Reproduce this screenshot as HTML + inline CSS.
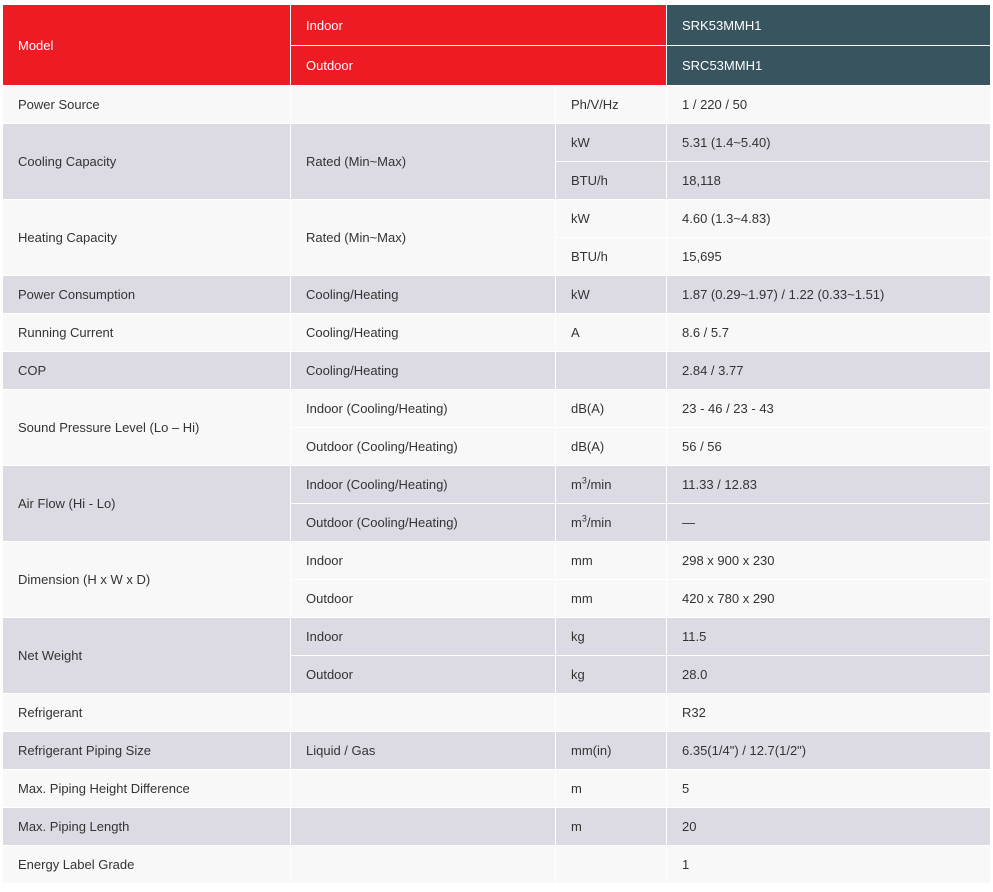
<!DOCTYPE html>
<html><head><meta charset="utf-8"><style>
body{margin:0;background:#fff;font-family:"Liberation Sans",sans-serif;}
table{position:absolute;left:2px;top:4px;border-collapse:collapse;table-layout:fixed;width:988px;font-size:13px;color:#333;}
td{border:1px solid #fff;padding:0 0 0 15px;height:37px;vertical-align:middle;white-space:nowrap;}
.h td{height:40px;color:#fff}
.h2 td{height:39px;color:#fff}
.r{background:#ed1c24}
.t{background:#37545f}
.l td{background:#f8f8f8}
.g td{background:#dcdbe4}
sup{font-size:9px;line-height:0}
</style></head><body>
<table>
<colgroup><col style="width:288px"><col style="width:265px"><col style="width:111px"><col style="width:324px"></colgroup>
<tr class="h"><td class="r" rowspan="2">Model</td><td class="r" colspan="2">Indoor</td><td class="t">SRK53MMH1</td></tr>
<tr class="h2"><td class="r" colspan="2">Outdoor</td><td class="t">SRC53MMH1</td></tr>
<tr class="l"><td>Power Source</td><td></td><td>Ph/V/Hz</td><td>1 / 220 / 50</td></tr>
<tr class="g"><td rowspan="2">Cooling Capacity</td><td rowspan="2">Rated (Min~Max)</td><td>kW</td><td>5.31 (1.4~5.40)</td></tr>
<tr class="g"><td>BTU/h</td><td>18,118</td></tr>
<tr class="l"><td rowspan="2">Heating Capacity</td><td rowspan="2">Rated (Min~Max)</td><td>kW</td><td>4.60 (1.3~4.83)</td></tr>
<tr class="l"><td>BTU/h</td><td>15,695</td></tr>
<tr class="g"><td>Power Consumption</td><td>Cooling/Heating</td><td>kW</td><td>1.87 (0.29~1.97) / 1.22 (0.33~1.51)</td></tr>
<tr class="l"><td>Running Current</td><td>Cooling/Heating</td><td>A</td><td>8.6 / 5.7</td></tr>
<tr class="g"><td>COP</td><td>Cooling/Heating</td><td></td><td>2.84 / 3.77</td></tr>
<tr class="l"><td rowspan="2">Sound Pressure Level (Lo – Hi)</td><td>Indoor (Cooling/Heating)</td><td>dB(A)</td><td>23 - 46 / 23 - 43</td></tr>
<tr class="l"><td>Outdoor (Cooling/Heating)</td><td>dB(A)</td><td>56 / 56</td></tr>
<tr class="g"><td rowspan="2">Air Flow (Hi - Lo)</td><td>Indoor (Cooling/Heating)</td><td>m<sup>3</sup>/min</td><td>11.33 / 12.83</td></tr>
<tr class="g"><td>Outdoor (Cooling/Heating)</td><td>m<sup>3</sup>/min</td><td>—</td></tr>
<tr class="l"><td rowspan="2">Dimension (H x W x D)</td><td>Indoor</td><td>mm</td><td>298 x 900 x 230</td></tr>
<tr class="l"><td>Outdoor</td><td>mm</td><td>420 x 780 x 290</td></tr>
<tr class="g"><td rowspan="2">Net Weight</td><td>Indoor</td><td>kg</td><td>11.5</td></tr>
<tr class="g"><td>Outdoor</td><td>kg</td><td>28.0</td></tr>
<tr class="l"><td>Refrigerant</td><td></td><td></td><td>R32</td></tr>
<tr class="g"><td>Refrigerant Piping Size</td><td>Liquid / Gas</td><td>mm(in)</td><td>6.35(1/4") / 12.7(1/2")</td></tr>
<tr class="l"><td>Max. Piping Height Difference</td><td></td><td>m</td><td>5</td></tr>
<tr class="g"><td>Max. Piping Length</td><td></td><td>m</td><td>20</td></tr>
<tr class="l"><td>Energy Label Grade</td><td></td><td></td><td>1</td></tr>
</table>
</body></html>
